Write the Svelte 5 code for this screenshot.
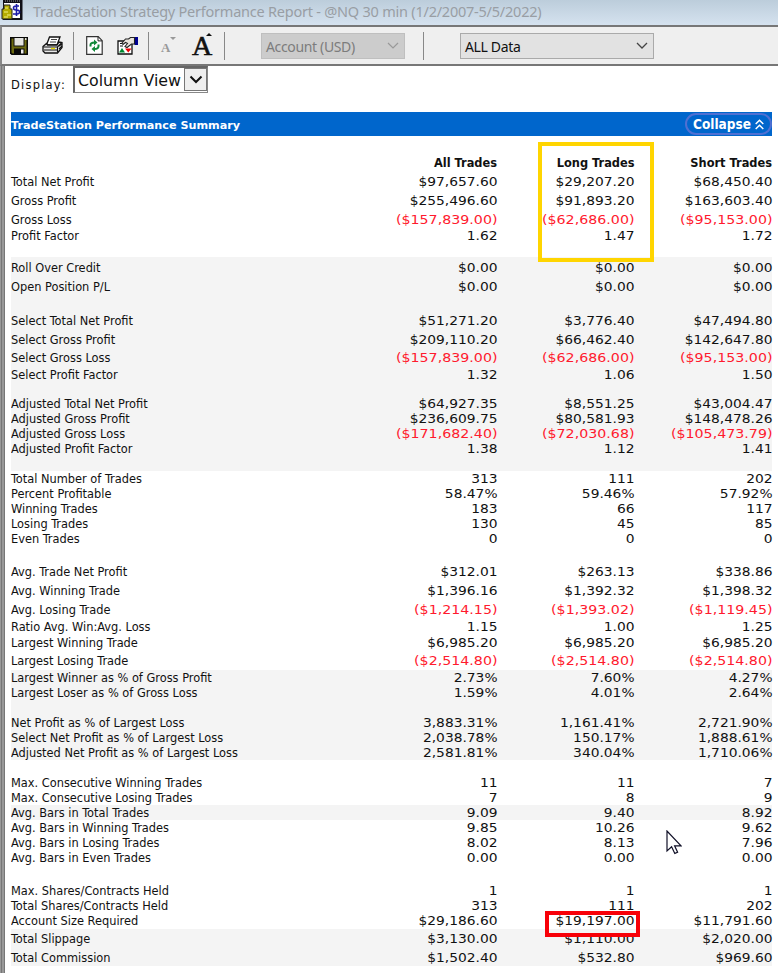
<script>
  const TALL = 18.7;
  const SHORT = 15;

  let account = "Account (USD)";
  let range = "ALL Data";
  let view = "Column View";

  // h is the row height, a row without a label is a spacer
  const rows = [
    { label: "Total Net Profit", values: ["$97,657.60", "$29,207.20", "$68,450.40"], h: TALL },
    { label: "Gross Profit", values: ["$255,496.60", "$91,893.20", "$163,603.40"], h: TALL },
    { label: "Gross Loss", values: ["($157,839.00)", "($62,686.00)", "($95,153.00)"], h: TALL },
    { label: "Profit Factor", values: ["1.62", "1.47", "1.72"], h: SHORT },
    { h: 13.7 },
    { label: "Roll Over Credit", values: ["$0.00", "$0.00", "$0.00"], h: 20.8, shade: true },
    { label: "Open Position P/L", values: ["$0.00", "$0.00", "$0.00"], h: 18, shade: true },
    { h: 15.2, shade: true },
    { label: "Select Total Net Profit", values: ["$51,271.20", "$3,776.40", "$47,494.80"], h: TALL, shade: true },
    { label: "Select Gross Profit", values: ["$209,110.20", "$66,462.40", "$142,647.80"], h: TALL, shade: true },
    { label: "Select Gross Loss", values: ["($157,839.00)", "($62,686.00)", "($95,153.00)"], h: TALL, shade: true },
    { label: "Select Profit Factor", values: ["1.32", "1.06", "1.50"], h: SHORT, shade: true },
    { h: 14.1, shade: true },
    { label: "Adjusted Total Net Profit", values: ["$64,927.35", "$8,551.25", "$43,004.47"], h: SHORT, shade: true },
    { label: "Adjusted Gross Profit", values: ["$236,609.75", "$80,581.93", "$148,478.26"], h: SHORT, shade: true },
    { label: "Adjusted Gross Loss", values: ["($171,682.40)", "($72,030.68)", "($105,473.79)"], h: SHORT, shade: true },
    { label: "Adjusted Profit Factor", values: ["1.38", "1.12", "1.41"], h: SHORT, shade: true },
    { h: 14, shade: true },
    { h: 1 },
    { label: "Total Number of Trades", values: ["313", "111", "202"], h: SHORT },
    { label: "Percent Profitable", values: ["58.47%", "59.46%", "57.92%"], h: SHORT },
    { label: "Winning Trades", values: ["183", "66", "117"], h: SHORT },
    { label: "Losing Trades", values: ["130", "45", "85"], h: SHORT },
    { label: "Even Trades", values: ["0", "0", "0"], h: SHORT },
    { h: 16.2 },
    { label: "Avg. Trade Net Profit", values: ["$312.01", "$263.13", "$338.86"], h: TALL },
    { label: "Avg. Winning Trade", values: ["$1,396.16", "$1,392.32", "$1,398.32"], h: TALL },
    { label: "Avg. Losing Trade", values: ["($1,214.15)", "($1,393.02)", "($1,119.45)"], h: TALL },
    { label: "Ratio Avg. Win:Avg. Loss", values: ["1.15", "1.00", "1.25"], h: SHORT },
    { label: "Largest Winning Trade", values: ["$6,985.20", "$6,985.20", "$6,985.20"], h: 18.4 },
    { label: "Largest Losing Trade", values: ["($2,514.80)", "($2,514.80)", "($2,514.80)"], h: 18 },
    { label: "Largest Winner as % of Gross Profit", values: ["2.73%", "7.60%", "4.27%"], h: SHORT, shade: true },
    { label: "Largest Loser as % of Gross Loss", values: ["1.59%", "4.01%", "2.64%"], h: SHORT, shade: true },
    { h: 14.8, shade: true },
    { label: "Net Profit as % of Largest Loss", values: ["3,883.31%", "1,161.41%", "2,721.90%"], h: SHORT, shade: true },
    { label: "Select Net Profit as % of Largest Loss", values: ["2,038.78%", "150.17%", "1,888.61%"], h: SHORT, shade: true },
    { label: "Adjusted Net Profit as % of Largest Loss", values: ["2,581.81%", "340.04%", "1,710.06%"], h: SHORT, shade: true },
    { h: 15 },
    { label: "Max. Consecutive Winning Trades", values: ["11", "11", "7"], h: SHORT },
    { label: "Max. Consecutive Losing Trades", values: ["7", "8", "9"], h: SHORT },
    { label: "Avg. Bars in Total Trades", values: ["9.09", "9.40", "8.92"], h: SHORT, shade: true },
    { label: "Avg. Bars in Winning Trades", values: ["9.85", "10.26", "9.62"], h: SHORT },
    { label: "Avg. Bars in Losing Trades", values: ["8.02", "8.13", "7.96"], h: SHORT },
    { label: "Avg. Bars in Even Trades", values: ["0.00", "0.00", "0.00"], h: SHORT },
    { h: 18.6 },
    { label: "Max. Shares/Contracts Held", values: ["1", "1", "1"], h: SHORT },
    { label: "Total Shares/Contracts Held", values: ["313", "111", "202"], h: SHORT },
    { label: "Account Size Required", values: ["$29,186.60", "$19,197.00", "$11,791.60"], h: SHORT },
    { label: "Total Slippage", values: ["$3,130.00", "$1,110.00", "$2,020.00"], h: 20.6, shade: true },
    { label: "Total Commission", values: ["$1,502.40", "$532.80", "$969.60"], h: 17.2, shade: true },
  ];
</script>

<div class="window">
  <div class="titlebar">
    <svg class="app-icon" width="22" height="20" viewBox="0 0 22 20">
      <rect x="2" y="0" width="19.5" height="20" fill="#101018" />
      <path d="M4 1h16" stroke="#999" stroke-dasharray="1 1" />
      <rect x="3" y="3" width="16" height="15" fill="#fff" />
      <path d="M3 5h6v4h2v10H1V9h2z" fill="#b4ac00" stroke="#222" />
      <path d="M4 8h3M3 12h4M6 15h4M3 17h4" stroke="#f4f080" />
      <path d="M18 6h-3q-2.500 0-2.500 2t2.500 2h1q2.500 0 2.500 2t-2.500 2h-4M15.500 4v12" fill="none" stroke="#1c1ca8" stroke-width="1.6" />
    </svg>
    <span class="title">TradeStation Strategy Performance Report - @NQ 30 min (1/2/2007-5/5/2022)</span>
  </div>

  <div class="toolbar">
    <svg class="icon save" width="18" height="18" viewBox="0 0 18 18">
      <path d="M0 0h18v18H1.500L0 16.500z" fill="#080808" />
      <path d="M1.500 1.500h15v15h-14l-1-1z" fill="#6c6a10" />
      <rect x="3.500" y="1" width="11" height="8.500" fill="#111" />
      <rect x="4.500" y="1" width="9" height="7.500" fill="#e4e4e0" />
      <rect x="15" y="1" width="1.500" height="2" fill="#ddd" />
      <rect x="4" y="11.500" width="10.500" height="5.500" fill="#080808" />
      <rect x="11" y="12.500" width="2.500" height="4" fill="#eee" />
    </svg>
    <svg class="icon print" width="21" height="19" viewBox="0 0 21 19">
      <path d="M7.500 1h10.500l-3 8H4.500z" fill="#fff" stroke="#111" stroke-width="1.3" />
      <path d="M9 3.500h6M8 6h6" stroke="#444" />
      <path d="M1 10.500l3.500-3 1 1.500h9.500l2-3 3 .5v5l-4.500 5.500H3l-2-2z" fill="#e8e8e8" stroke="#111" stroke-width="1.3" />
      <path d="M1.500 11h14l4-4M2 14h13.500M15.500 11v5M17 10l3-2M17 13l3-3" stroke="#111" stroke-width="1.1" fill="none" />
      <path d="M9 12.500h4" stroke="#e8dc00" stroke-width="1.4" />
    </svg>
    <i class="sep"></i>
    <svg class="icon refresh" width="17" height="19" viewBox="0 0 17 19">
      <path d="M.7.7h11.500l4 4v13.600H.7z" fill="#fff" stroke="#333" stroke-width="1.2" />
      <path d="M12 .7v4.200h4" fill="none" stroke="#222" />
      <path d="M4.500 10.500V9q0-2.500 4-2.500M12.500 8.500v1.500q0 3-4 3" fill="none" stroke="#108838" stroke-width="2" />
      <path d="M8 3.500v6L11.500 6.500zM9 10v6l-3.500-3z" fill="#108838" />
    </svg>
    <svg class="icon props" width="21" height="19" viewBox="0 0 21 19">
      <path d="M1 5h14v13H1z" fill="#fff" stroke="#111" stroke-width="1.3" />
      <path d="M17.500 1H21v8h-3.500z" fill="#000090" />
      <path d="M5 7l3.500-4h3l2-1.500h4V8h-3l-4.500 3.500-2-1 2.500-3-2-1-2.500 2z" fill="#e9e4dc" stroke="#222" stroke-width="1.1" />
      <path d="M2 16.500L5 12l3 4.500z" fill="#008830" />
      <path d="M8 12.500h6.500l-3.200 4z" fill="#f00000" />
      <path d="M3 7.500h2M3 10h3" stroke="#111" />
    </svg>
    <i class="sep"></i>
    <span class="font-down">A<svg width="6" height="3" viewBox="0 0 6 3"><path d="M0 0h6L3 3z" fill="#999" /></svg></span>
    <span class="font-up">A<svg width="6" height="3" viewBox="0 0 6 3"><path d="M0 3h6L3 0z" fill="#111" /></svg></span>
    <i class="sep"></i>
    <div class="combo disabled">
      <span>{account}</span>
      <svg width="12" height="7" viewBox="0 0 12 7"><path d="M1 1l5 5 5-5" fill="none" stroke="#999" stroke-width="1.2" /></svg>
    </div>
    <i class="sep long"></i>
    <div class="combo">
      <span>{range}</span>
      <svg width="12" height="7" viewBox="0 0 12 7"><path d="M1 1l5 5 5-5" fill="none" stroke="#444" stroke-width="1.3" /></svg>
    </div>
  </div>

  <div class="content">
    <div class="display">
      <span class="display-label">Display:</span>
      <div class="view-select">
        <span>{view}</span>
        <button aria-label="Open list">
          <svg width="14" height="9" viewBox="0 0 14 9"><path d="M1.500 1.500L7 7l5.500-5.500" fill="none" stroke="#111" stroke-width="2" /></svg>
        </button>
      </div>
    </div>

    <div class="summary-bar">
      <span class="summary-title">TradeStation Performance Summary</span>
      <button class="collapse">
        <span>Collapse</span>
        <svg width="9" height="11" viewBox="0 0 9 11"><path d="M.7 5l3.800-3.700L8.300 5M.7 10l3.800-3.700L8.300 10" fill="none" stroke="#fff" stroke-width="1.5" /></svg>
      </button>
    </div>

    <div class="report">
      <div class="row head">
        <span></span>
        <span>All Trades</span>
        <span>Long Trades</span>
        <span>Short Trades</span>
      </div>
      {#each rows as row}
        <div class="row" class:shade={row.shade} style="height: {row.h}px">
          {#if row.label}
            <span class="label">{row.label}</span>
            {#each row.values as value}
              <span class="value" class:negative={value.startsWith("(")}>{value}</span>
            {/each}
          {/if}
        </div>
      {/each}
    </div>
  </div>

  <div class="mark yellow"></div>
  <div class="mark red"></div>
  <svg class="cursor" width="16" height="25" viewBox="0 0 16 25">
    <path d="M1 1v20l4.600-4.200 3.200 6.600 2.800-1.200-3-6.400H15z" fill="#fff" stroke="#111128" stroke-width="1.2" />
  </svg>
</div>

<style>
  :global(body) {
    margin: 0;
    background: #fff;
  }

  .window {
    position: relative;
    width: 778px;
    height: 973px;
    overflow: hidden;
    font-family: "DejaVu Sans", Verdana, sans-serif;
    color: #111;
  }

  .titlebar {
    display: flex;
    height: 25px;
    box-sizing: border-box;
    padding-left: 1px;
    background: linear-gradient(#bccddb, #d5e2ef);
  }

  .title {
    margin-left: 10px;
    font-family: "Noto Sans", sans-serif;
    font-size: 14.5px;
    line-height: 22px;
    letter-spacing: -0.23px;
    color: #999ea4;
    white-space: nowrap;
  }

  .toolbar {
    display: flex;
    align-items: center;
    height: 41px;
    box-sizing: border-box;
    padding-left: 8px;
    border-top: 2px solid #777;
    border-bottom: 2px solid #777;
    border-left: 2px solid #888;
    background: #efefef;
  }

  .print {
    margin-left: 14px;
  }

  .sep {
    width: 1px;
    height: 28px;
    margin-left: 10px;
    background: #888;
  }

  .refresh {
    margin-left: 12px;
  }

  .props {
    margin-left: 14px;
  }

  .font-down,
  .font-up {
    display: flex;
    align-items: flex-start;
    font-family: "Liberation Serif", serif;
  }

  .font-down {
    width: 16px;
    margin: 5px 0 0 12px;
    font-size: 13px;
    font-weight: bold;
    line-height: 22px;
    color: #999;
  }

  .font-up {
    width: 22px;
    margin-left: 15px;
    font-size: 28px;
    line-height: 26px;
    -webkit-text-stroke: 0.6px #111;
  }

  .font-up svg {
    margin-left: -6px;
  }

  .combo {
    display: flex;
    align-items: center;
    justify-content: space-between;
    width: 194px;
    height: 26px;
    box-sizing: border-box;
    margin-left: 36px;
    padding: 0 5px 0 4px;
    border: 1px solid #aaa;
    background: #e2e2e2;
    font-family: "Noto Sans", sans-serif;
    font-size: 14px;
    letter-spacing: -0.35px;
  }

  .combo.disabled {
    width: 144px;
    border-color: #bfbfbf;
    background: #ccc;
    color: #7c7c7c;
  }

  .combo span {
    position: relative;
    top: 1px;
  }

  .sep.long {
    margin-left: 18px;
  }

  .content {
    height: 907px;
    box-sizing: border-box;
    padding: 0 6px 0 11px;
    background: linear-gradient(90deg, #999 1px, #777 1px 2px, #999 2px 4px, #777 4px 5px, #fff 5px);
  }

  .display {
    display: flex;
    height: 46px;
  }

  .display-label {
    width: 62px;
    padding-top: 11px;
    font-size: 11.5px;
    line-height: 16px;
    letter-spacing: 1.2px;
  }

  .view-select {
    display: flex;
    width: 135px;
    height: 27px;
    box-sizing: border-box;
    padding-left: 3px;
    border: 1px solid #888;
    border-top: 2px solid #666;
    border-left: 2px solid #666;
    font-size: 15.8px;
    line-height: 25px;
  }

  .view-select span {
    flex: 1;
    white-space: nowrap;
  }

  .view-select button {
    width: 23px;
    height: 23px;
    padding: 0;
    border: 1px solid #777;
    background: #efefef;
  }

  .summary-bar {
    display: flex;
    align-items: center;
    justify-content: space-between;
    width: 761px;
    height: 24px;
    background: #0066cc;
    color: #fff;
    font-weight: bold;
  }

  .summary-title {
    padding-top: 3px;
    font-size: 11.2px;
  }

  .collapse {
    display: flex;
    align-items: center;
    justify-content: space-between;
    width: 87px;
    height: 22px;
    box-sizing: border-box;
    padding: 0 6px;
    border: 2px solid #4f70d2;
    border-radius: 11px;
    background: none;
    color: #fff;
    font: bold 13.5px "DejaVu Sans Condensed", "DejaVu Sans", sans-serif;
  }

  .report {
    width: 761px;
    padding-top: 18px;
  }

  .row {
    display: grid;
    grid-template-columns: 1fr 137.5px 137.5px 137.5px;
    align-items: center;
    white-space: nowrap;
  }

  .row.shade {
    background: #f4f4f4;
  }

  .head {
    height: 18.7px;
    font-size: 11.4px;
    font-weight: bold;
    text-align: right;
  }

  .label,
  .value {
    position: relative;
    top: 0.7px;
    font-size: 12px;
    line-height: 15px;
  }

  .label {
    font-family: "DejaVu Sans Condensed", Tahoma, sans-serif;
    transform: scaleX(1.055);
    transform-origin: left;
  }

  /* figures are set wider than the labels */
  .value {
    text-align: right;
    transform: scaleX(1.15);
    transform-origin: right;
  }

  .negative {
    color: #ff1a2e;
    transform: scaleX(1.185);
  }

  .mark {
    position: absolute;
    box-sizing: border-box;
  }

  .yellow {
    left: 538px;
    top: 142px;
    width: 116px;
    height: 120px;
    border: 4px solid #ffd500;
  }

  .red {
    left: 545px;
    top: 911px;
    width: 95px;
    height: 26px;
    border: 4px solid #f80008;
  }

  .cursor {
    position: absolute;
    left: 666px;
    top: 830px;
  }
</style>
